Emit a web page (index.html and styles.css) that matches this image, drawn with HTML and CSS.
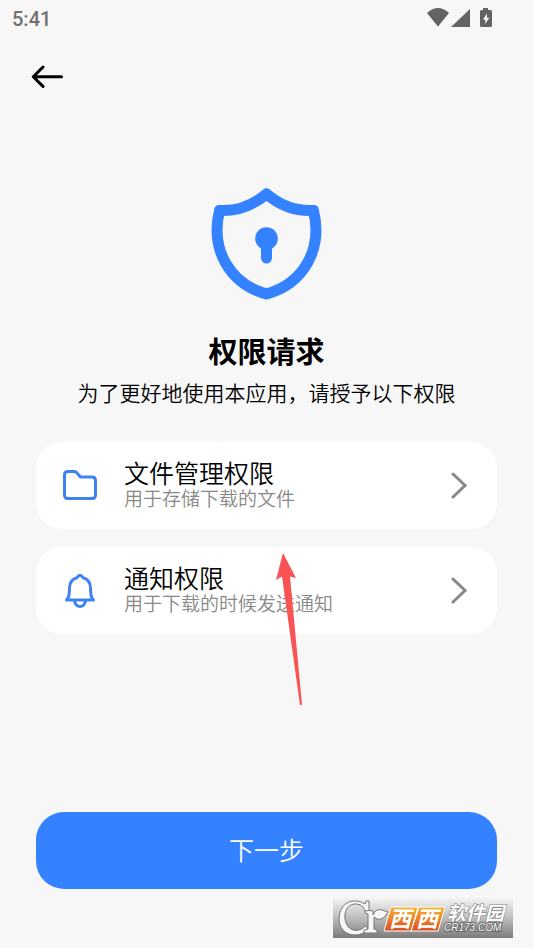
FILE: index.html
```html
<!DOCTYPE html>
<html lang="zh-CN">
<head>
<meta charset="utf-8">
<meta name="viewport" content="width=device-width, initial-scale=1">
<title>权限请求</title>
<link rel="stylesheet" href="styles.css">
</head>
<body>
<div class="status">
  <time class="clock">5:41</time>
  <svg class="status-icons" width="68" height="22" viewBox="0 0 68 22" aria-hidden="true">
    <path d="M0 5Q11-5 22 5L11 18.500Z"/>
    <path d="M43 1V19H24Z"/>
    <path d="M56 0h5v2h2.500q1.500 0 1.500 1.500v14q0 1.500-1.500 1.500h-9q-1.500 0-1.500-1.500v-14Q53 2 54.500 2H56Z"/>
    <path class="bolt" d="M60 5.500v4.300h2.200L58.300 16v-4.400h-2.400Z"/>
  </svg>
</div>
<header class="top">
  <button class="back" type="button" aria-label="返回">
    <svg width="32" height="24" viewBox="0 0 32 24"><path d="M12 2 2.300 11.700 12 21.400M3 11.700H30.500"/></svg>
  </button>
</header>
<main class="main">
  <svg class="shield" width="112" height="112" viewBox="0 0 112 112" aria-hidden="true">
    <path class="shield-line" d="M55.500 6Q34 24 8.500 22.500C-1 62 19 96 55.500 106C92 96 112 62 102.500 22.500Q77 24 55.500 6Z"/>
    <circle cx="55.500" cy="50.500" r="11.300"/>
    <path class="key-line" d="M55.500 50V70"/>
  </svg>
  <h1 class="title">权限请求</h1>
  <p class="intro">为了更好地使用本应用，请授予以下权限</p>
  <div class="list">
    <button class="card" type="button">
      <svg class="icon" width="36" height="36" viewBox="0 0 36 36"><path d="M6 3.500h6q1.500 0 2.500 1l4 4.500H30q3.500 0 3.500 3.500V27q0 3.500-3.500 3.500H6Q2.500 30.500 2.500 27V7Q2.500 3.500 6 3.500Z"/></svg>
      <span class="copy"><span class="name">文件管理权限</span><span class="desc">用于存储下载的文件</span></span>
      <svg class="chevron" width="16" height="28" viewBox="0 0 16 28"><path d="M2 2 14 13.500 2 25"/></svg>
    </button>
    <button class="card" type="button">
      <svg class="icon" width="36" height="36" viewBox="0 0 36 36"><path d="M4.500 27H31.500C28 24 29 21 28.500 14.500Q28 6.500 21 4.700Q18 0 15 4.700Q8 6.500 7.500 14.500C7 21 8 24 4.500 27ZM12.500 28Q13.500 33.500 18 33.500T23.500 28"/></svg>
      <span class="copy"><span class="name">通知权限</span><span class="desc">用于下载的时候发送通知</span></span>
      <svg class="chevron" width="16" height="28" viewBox="0 0 16 28"><path d="M2 2 14 13.500 2 25"/></svg>
    </button>
    <svg class="pointer" width="28" height="154" viewBox="0 0 28 154" aria-hidden="true"><path d="M7 1 20 26 14 24.500 26 153H24L6 24.500 0 28Z"/></svg>
  </div>
  <button class="next" type="button">下一步</button>
</main>
<svg class="mark" width="180" height="40" viewBox="0 0 180 40" role="img" aria-label="西西软件园 CR173.COM">
  <defs>
    <linearGradient id="band" x2="0" y2="1"><stop stop-color="#f4f4f4"/><stop offset=".5" stop-color="#bdbdbd"/><stop offset="1" stop-color="#7b7b7b"/></linearGradient>
    <linearGradient id="tile" x2="0" y2="1"><stop stop-color="#f5b632"/><stop offset="1" stop-color="#dc4c20"/></linearGradient>
  </defs>
  <path fill="url(#band)" d="M0 0H180V40H0Z"/>
  <g class="leaf-mark">
    <path d="M36 3V15H33Q31 7 24 6C15 5 11 13 12 21C13 29 19 34 26 32Q30 31 32 28L35 30Q31 37 22 37C11 37 6 29 6 20C7 8 14 2 24 3Q29 4 32 6L33 3Z"/>
    <path d="M32 13Q37 12 40 13V17Q43 10 49 12Q52 13 55 14Q50 23 44 21L41 19V31L44 32V35H31V32L35 31V16L32 15Z"/>
  </g>
  <path class="tile" fill="url(#tile)" d="M58 9H85L78 33H51ZM86 9H112L105 33H78Z"/>
  <text class="cjk big" x="56" y="29">西</text>
  <text class="cjk big" x="83" y="29">西</text>
  <text class="cjk small" x="114" y="22">软件园</text>
  <text class="domain" x="111" y="33">CR173.COM</text>
</svg>
</body>
</html>
```
FILE: styles.css
```css
* { box-sizing: border-box; }
body {
  margin: 0;
  min-height: 100vh;
  display: flex;
  flex-direction: column;
  position: relative;
  background: #f7f7f7;
  color: #000;
  font-family: "Noto Sans CJK SC", sans-serif;
  font-weight: 350;
}
button { font: inherit; border: 0; padding: 0; color: inherit; cursor: pointer; }
svg { display: block; flex: none; }
.status {
  display: flex;
  justify-content: space-between;
  height: 36px;
  padding: 8px 38px 0 12px;
}
.clock { font: 500 20px/22px Roboto, sans-serif; color: #707070; }
.status-icons { fill: #636363; }
.status-icons .bolt { fill: #f7f7f7; }
.top { padding: 20px 31px; }
.back { display: flex; align-items: center; height: 42px; background: none; }
.back svg { fill: none; stroke: #000; stroke-width: 3; stroke-linecap: round; stroke-linejoin: round; }
.main {
  flex: 1;
  display: flex;
  flex-direction: column;
  align-items: center;
  padding: 70px 36px 59px;
}
.shield { fill: #3482ff; }
.shield-line { fill: none; stroke: #3482ff; stroke-width: 11; stroke-linejoin: round; }
.key-line { stroke: #3482ff; stroke-width: 11; stroke-linecap: round; }
.title { margin: 30px 0 0; font-size: 29px; line-height: 40px; font-weight: 700; }
.intro { margin: 7px 0 0; font-size: 21px; line-height: 30px; white-space: nowrap; }
.list {
  position: relative;
  align-self: stretch;
  display: flex;
  flex-direction: column;
  gap: 18px;
  margin-top: 35px;
}
.card {
  display: flex;
  align-items: center;
  height: 87px;
  padding: 0 30px 0 26px;
  background: #fff;
  border-radius: 26px;
  text-align: left;
}
.icon { fill: none; stroke: #3e83f5; stroke-width: 3; stroke-linejoin: round; }
.copy { flex: 1; display: flex; flex-direction: column; margin-left: 26px; padding-bottom: 3px; }
.name { font-size: 25px; line-height: 28px; }
.desc { font-size: 19px; line-height: 24px; color: #888; }
.chevron { fill: none; stroke: #888; stroke-width: 3; stroke-linecap: round; }
.pointer { position: absolute; left: 52%; top: 110px; fill: #fa5353; pointer-events: none; }
.next {
  align-self: stretch;
  height: 77px;
  margin-top: auto;
  padding-bottom: 4px;
  border-radius: 28px;
  background: #3482ff;
  color: #fff;
  font-size: 25px;
}
.mark { position: absolute; right: 20px; bottom: 10px; }
.leaf-mark { fill: #f7f7f7; stroke: #777; stroke-width: 1; }
.tile { stroke: #fff; stroke-width: 1; }
.cjk { font-family: "Noto Sans CJK SC", sans-serif; font-weight: 700; font-style: italic; fill: #fff; }
.big { font-size: 22px; }
.small { font-size: 19px; stroke: #777; stroke-width: 1; paint-order: stroke; }
.domain { font: italic 400 10px "Liberation Sans", sans-serif; fill: #fff; stroke: #666; stroke-width: 2; paint-order: stroke; }
```
